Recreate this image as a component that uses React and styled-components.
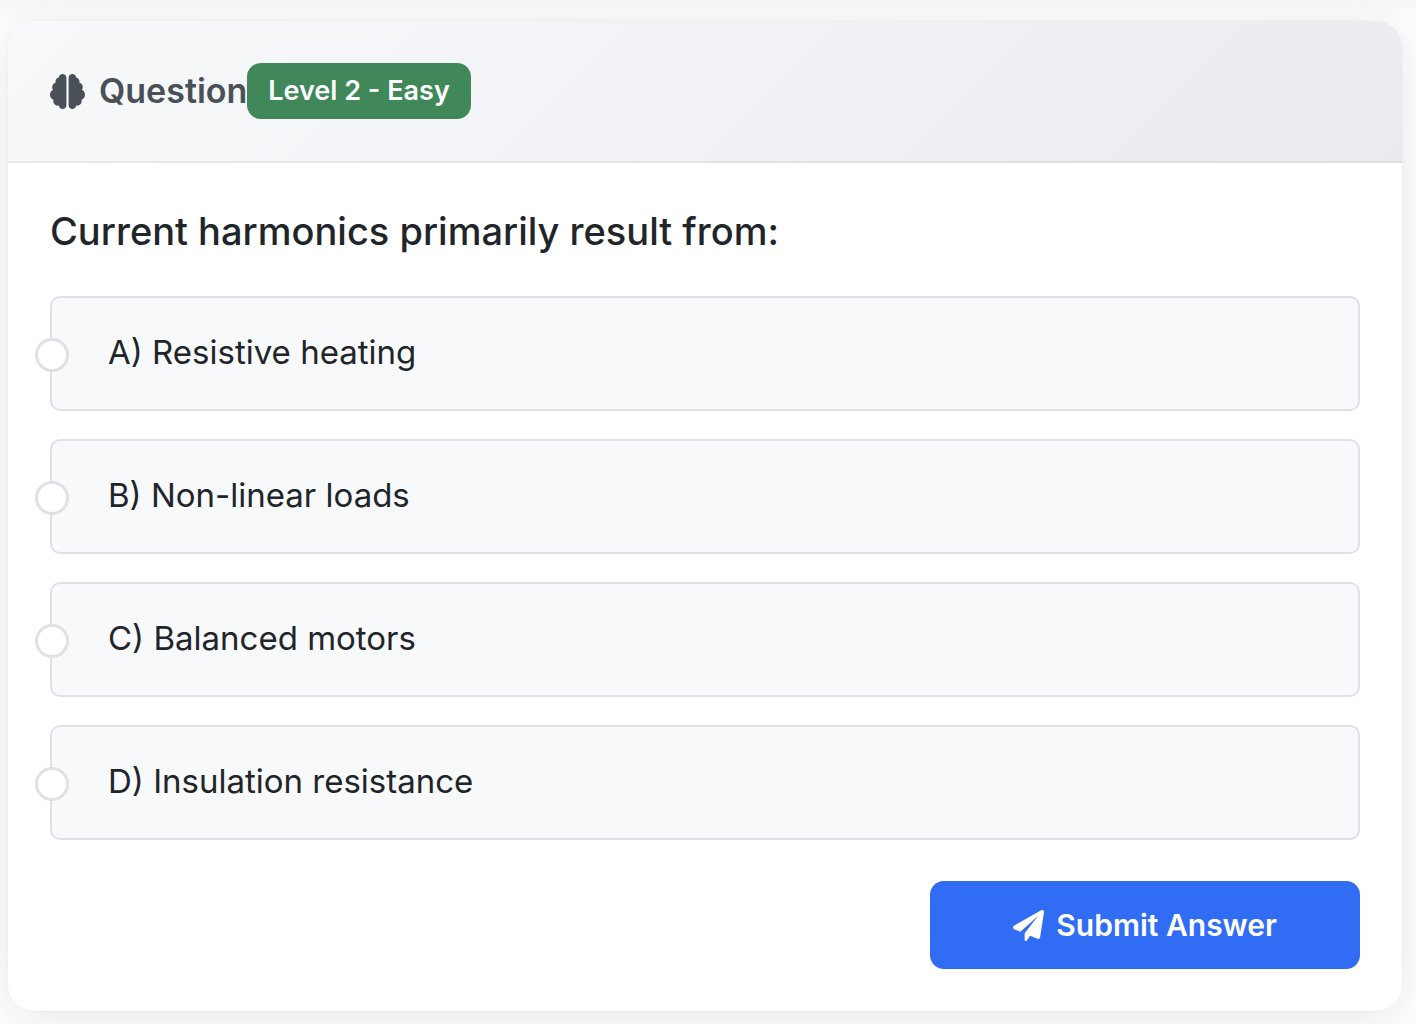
import React, { useState } from 'react';
import styled, { createGlobalStyle } from 'styled-components';
import { FaBrain } from 'react-icons/fa6';

const GlobalStyle = createGlobalStyle`
  * {
    box-sizing: border-box;
  }

  body {
    margin: 0;
    background: #fff;
    color: #212529;
    font-family: Inter, "Liberation Sans", sans-serif;
  }
`;

const Page = styled.main`
  padding: 21px 14px 13px 8px;
  box-shadow: inset 0 26px 26px -20px rgba(0, 0, 0, 0.045);
`;

const Card = styled.form`
  background: #fff;
  border-radius: 26px;
  box-shadow:
    0 0 0 1px rgba(0, 0, 0, 0.02),
    0 7px 52px rgba(0, 0, 0, 0.1);
  overflow: hidden;
`;

const CardHeader = styled.header`
  display: flex;
  align-items: center;
  padding: 42px;
  border-bottom: 2px solid rgba(0, 0, 0, 0.06);
  background: linear-gradient(135deg, #f8f9fb 0%, #eaebef 100%);
`;

const CardTitle = styled.h1`
  display: flex;
  align-items: center;
  gap: 14px;
  margin: 0;
  color: #495057;
  font-size: 34px;
  line-height: 42px;
  font-weight: 600;
`;

const LevelBadge = styled.span`
  padding: 10px 21px;
  border-radius: 14px;
  background: #40875a;
  color: #fff;
  font-size: 27px;
  line-height: 36px;
  font-weight: 600;
`;

const CardBody = styled.div`
  padding: 42px;
`;

const Options = styled.fieldset`
  display: grid;
  gap: 28px;
  min-width: 0;
  margin: 0;
  padding: 0;
  border: 0;
`;

const QuestionText = styled.legend`
  padding: 0 0 38px;
  font-size: 38px;
  line-height: 53px;
  font-weight: 500;
`;

const Option = styled.label`
  display: flex;
  align-items: center;
  gap: 39px;
  padding: 28px 40px 30px 0;
  border: 2px solid #dee2e6;
  border-radius: 10px;
  background: #f8f9fb;
  font-size: 33px;
  line-height: 53px;
  cursor: pointer;
`;

const OptionRadio = styled.input`
  appearance: none;
  flex: none;
  width: 34px;
  height: 34px;
  margin: 4px 0 0 -17px;
  border: 3px solid #dee2e6;
  border-radius: 50%;
  background: #fff;

  &:checked {
    border: 10px solid #316cf4;
  }
`;

const CardActions = styled.div`
  display: flex;
  justify-content: flex-end;
  padding-top: 41px;
`;

const SubmitButton = styled.button`
  display: flex;
  align-items: center;
  justify-content: center;
  gap: 12px;
  padding: 22px 83px;
  border: 0;
  border-radius: 14px;
  background: #316cf4;
  color: #fff;
  font-family: inherit;
  font-size: 30px;
  line-height: 44px;
  font-weight: 600;
  cursor: pointer;
`;

const options = [
  { id: 'A', text: 'Resistive heating' },
  { id: 'B', text: 'Non-linear loads' },
  { id: 'C', text: 'Balanced motors' },
  { id: 'D', text: 'Insulation resistance' }
];

const PaperPlane = () => (
  <svg width="31" height="31" viewBox="0 0 512 512" fill="currentColor" aria-hidden="true">
    <path d="M511.6 36.86l-64 415.1c-1.5 9.734-7.375 18.22-15.97 23.05c-4.844 2.719-10.27 4.097-15.68 4.097c-4.188 0-8.319-.8154-12.29-2.472l-122.6-51.1l-50.86 76.29C226.3 508.5 219.8 512 212.8 512C201.3 512 192 502.7 192 491.2v-96.18c0-7.115 2.372-14.03 6.742-19.64L416 96l-293.7 264.3L19.69 317.5C8.438 312.8 .8125 302.2 .0625 289.1s5.469-23.72 16.06-29.99l448-255.1c10.69-6.109 23.88-5.547 34 1.406S513.5 24.72 511.6 36.86z" />
  </svg>
);

function App() {
  const [answer, setAnswer] = useState('');

  return (
    <Page>
      <GlobalStyle />
      <Card onSubmit={(e) => e.preventDefault()}>
        <CardHeader>
          <CardTitle>
            <FaBrain size={35} aria-hidden="true" />
            Question
          </CardTitle>
          <LevelBadge>Level 2 - Easy</LevelBadge>
        </CardHeader>
        <CardBody>
          <Options>
            <QuestionText>Current harmonics primarily result from:</QuestionText>
            {options.map(({ id, text }) => (
              <Option key={id} htmlFor={`option-${id}`}>
                <OptionRadio
                  type="radio"
                  id={`option-${id}`}
                  name="answer"
                  value={id}
                  checked={answer === id}
                  onChange={() => setAnswer(id)}
                />
                <span>{id}) {text}</span>
              </Option>
            ))}
          </Options>
          <CardActions>
            <SubmitButton type="submit">
              <PaperPlane />
              Submit Answer
            </SubmitButton>
          </CardActions>
        </CardBody>
      </Card>
    </Page>
  );
}

export default App;
